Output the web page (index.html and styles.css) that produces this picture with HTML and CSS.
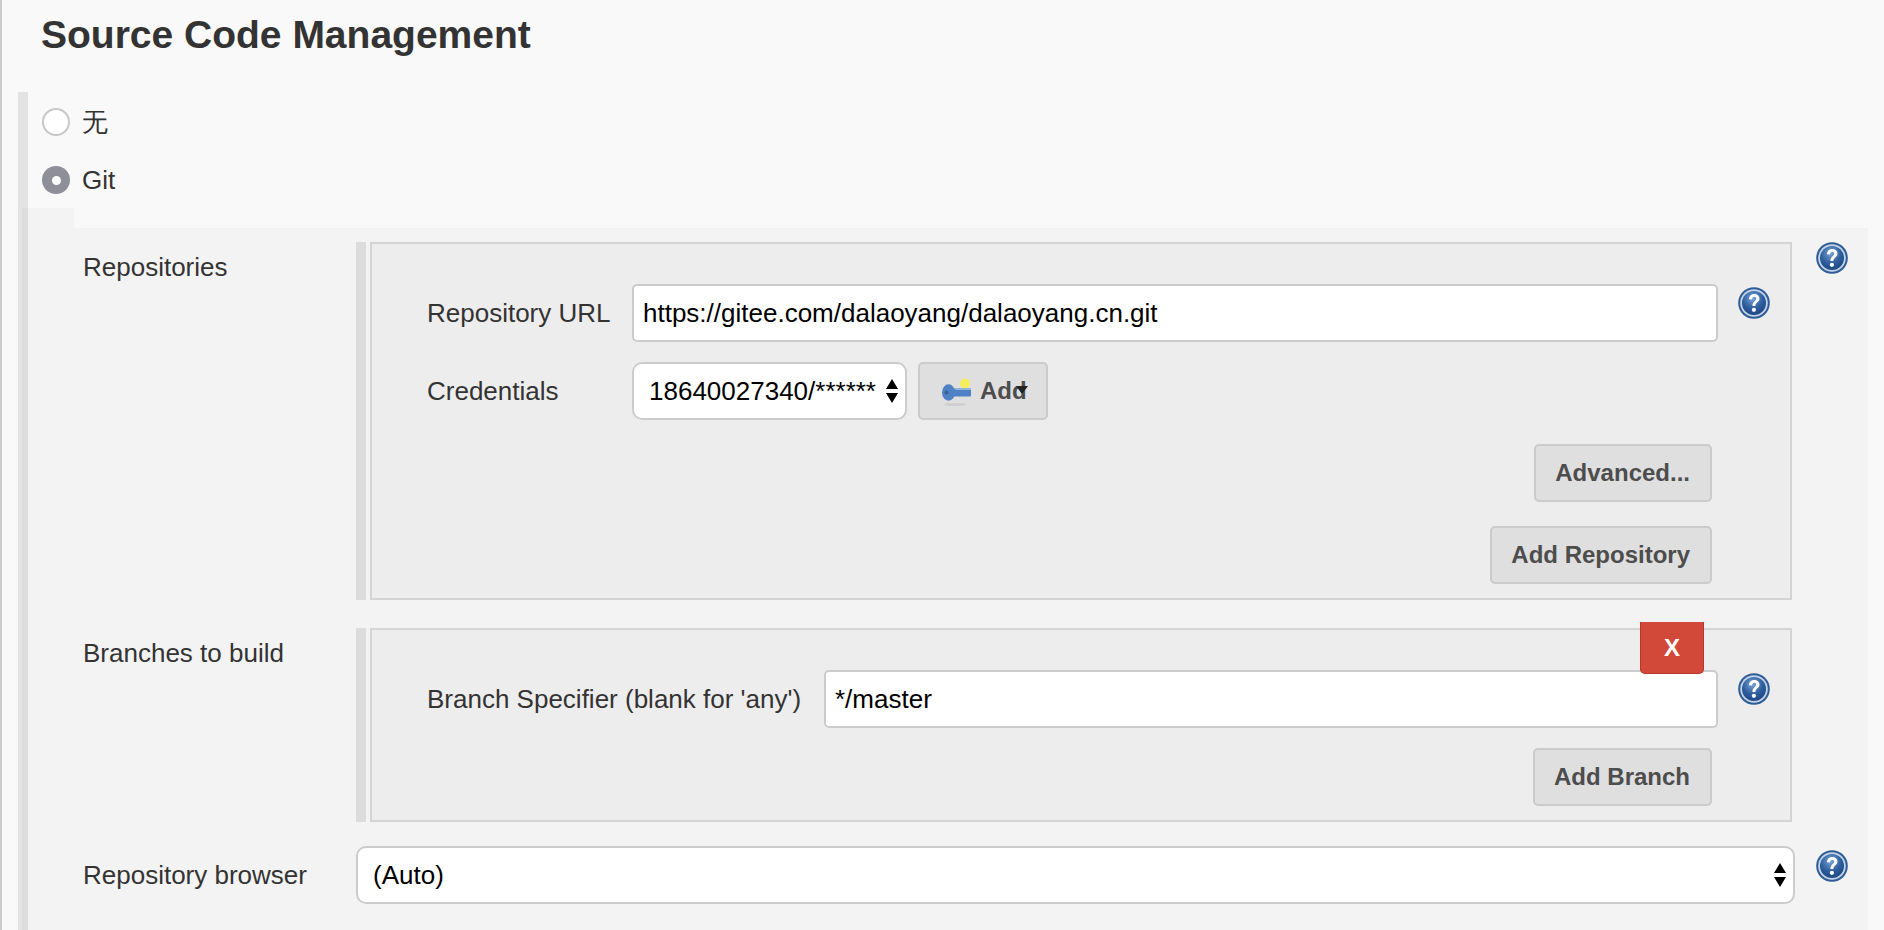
FILE: index.html
```html
<!DOCTYPE html>
<html lang="en">
<head>
<meta charset="utf-8">
<title>Source Code Management</title>
<link rel="stylesheet" href="styles.css">
</head>
<body>
<svg class="defs" aria-hidden="true">
  <defs>
    <radialGradient id="helpFill" cx="45%" cy="30%" r="75%">
      <stop offset="0" stop-color="#7ba5d6"/>
      <stop offset="0.55" stop-color="#2f5f9e"/>
      <stop offset="1" stop-color="#1c4480"/>
    </radialGradient>
    <symbol id="help" viewBox="0 0 32 32">
      <circle cx="16" cy="16" r="15.8" fill="#2f5c98"/>
      <circle cx="16" cy="16" r="13.800" fill="#c3d4e7"/>
      <circle cx="16" cy="16" r="12" fill="url(#helpFill)"/>
      <path d="M10.800 12.200c.3-3.400 2.600-5.300 5.500-5.300 3 0 5.200 1.800 5.200 4.600 0 3.900-4.100 3.800-4.100 7.500h-3c0-4.700 3.800-4.800 3.800-7.400 0-1.200-.8-1.900-1.900-1.900-1.300 0-2.100.9-2.300 2.700z" fill="#fff"/>
      <circle cx="15.900" cy="22.800" r="2.100" fill="#fff"/>
    </symbol>
    <symbol id="updown" viewBox="0 0 12 24">
      <path d="M6 0l6 10H0z M0 14h12L6 24z" fill="#000"/>
    </symbol>
  </defs>
</svg>
<div class="page">
  <h1 class="title">Source Code Management</h1>
  <section class="scm">
    <div class="choices">
      <label class="choice"><span class="radio"></span><span class="choice-text">无</span></label>
      <label class="choice"><span class="radio radio-on"></span><span class="choice-text">Git</span></label>
    </div>
    <div class="notch"></div>
    <div class="git">
      <div class="row row-repos">
        <div class="row-label">Repositories</div>
        <div class="list">
          <div class="gutter"></div>
          <div class="box box-repo">
            <div class="field field-url">
              <label class="field-label">Repository URL</label>
              <input class="text-input" type="text" value="https://gitee.com/dalaoyang/dalaoyang.cn.git">
              <svg class="help"><use href="#help"/></svg>
            </div>
            <div class="field field-cred">
              <label class="field-label">Credentials</label>
              <div class="select-wrap select-cred">
                <select class="select"><option>18640027340/******</option></select>
                <svg class="updown"><use href="#updown"/></svg>
              </div>
              <button class="btn btn-add" type="button">
                <svg class="key" viewBox="0 0 32 32">
                  <ellipse cx="13" cy="29.500" rx="11" ry="1.600" fill="#cfcfcf"/>
                  <circle cx="23" cy="8.500" r="5" fill="#f4ee5c"/>
                  <ellipse cx="6.500" cy="17.500" rx="6.500" ry="8.300" fill="#4f82c4"/>
                  <rect x="10" y="13.500" width="19" height="8" rx="1" fill="#4f82c4"/>
                  <rect x="13" y="13.500" width="16" height="1.500" fill="#8fb4dd"/>
                  <circle cx="4.500" cy="17.500" r="2" fill="#3a6094"/>
                </svg>
                <span>Add</span>
                <span class="caret"></span>
              </button>
            </div>
            <div class="actions actions-adv"><button class="btn" type="button">Advanced...</button></div>
            <div class="actions actions-add"><button class="btn" type="button">Add Repository</button></div>
          </div>
        </div>
        <svg class="help help-outer"><use href="#help"/></svg>
      </div>
      <div class="row row-branches">
        <div class="row-label">Branches to build</div>
        <div class="list">
          <div class="gutter"></div>
          <div class="box box-branch">
            <button class="btn-delete" type="button">X</button>
            <div class="field field-branch">
              <label class="field-label field-label-wide">Branch Specifier (blank for 'any')</label>
              <input class="text-input" type="text" value="*/master">
              <svg class="help"><use href="#help"/></svg>
            </div>
            <div class="actions actions-branch"><button class="btn" type="button">Add Branch</button></div>
          </div>
        </div>
      </div>
      <div class="row row-browser">
        <div class="row-label row-label-mid">Repository browser</div>
        <div class="select-wrap select-browser">
          <select class="select"><option>(Auto)</option></select>
          <svg class="updown"><use href="#updown"/></svg>
        </div>
        <svg class="help help-outer"><use href="#help"/></svg>
      </div>
    </div>
  </section>
</div>
</body>
</html>
```
FILE: styles.css
```css
* { box-sizing: border-box; }
html, body { margin: 0; height: 100%; overflow: hidden; }
body {
  font-family: "Liberation Sans", Arial, sans-serif;
  font-size: 26px;
  color: #333;
  background: #f9f9f9;
}
.defs { position: absolute; width: 0; height: 0; }
.page {
  height: 930px;
  border-left: 2px solid #ccc;
  padding-left: 16px;
  overflow: hidden;
}
.title {
  margin: 0;
  height: 92px;
  padding: 14px 0 0 23px;
  font-size: 39px;
  line-height: 42px;
  font-weight: 700;
  color: #333;
}
.scm {
  border-left: 10px solid #e3e3e3;
  height: 838px;
}
.choices {
  display: flex;
  flex-direction: column;
  gap: 30px;
  padding: 16px 0 14px 14px;
}
.choice { display: flex; align-items: center; gap: 12px; height: 28px; }
.radio {
  width: 28px;
  height: 28px;
  border-radius: 50%;
  background: #fff;
  border: 2px solid #c8c8c8;
}
.radio-on {
  background: #8f8f9a;
  border: 0;
  position: relative;
}
.radio-on::after {
  content: "";
  position: absolute;
  left: 9.500px;
  top: 9.500px;
  width: 9px;
  height: 9px;
  border-radius: 50%;
  background: #fff;
}
.choice-text { line-height: 26px; }
.notch {
  margin-left: -6px;
  width: 52px;
  height: 20px;
  background: rgba(0, 0, 0, .024);
}
.git {
  margin-left: -6px;
  width: 1846px;
  height: 702px;
  padding: 14px 0 0 61px;
  background: rgba(0, 0, 0, .024);
}
.row { display: flex; align-items: flex-start; }
.row-branches { margin-top: 28px; }
.row-browser { margin-top: 24px; }
.row-label { width: 273px; flex: none; line-height: 30px; padding-top: 10px; }
.row-label-mid { padding-top: 14px; }
.list { display: flex; gap: 4px; width: 1436px; flex: none; }
.gutter { width: 10px; flex: none; background: #dcdcdc; }
.box {
  position: relative;
  flex: 1;
  background: #ededed;
  border: 2px solid #d4d4d4;
  padding: 40px 20px 14px 55px;
}
.field { display: flex; align-items: center; }
.field-cred { margin-top: 20px; }
.field-label { width: 205px; flex: none; }
.field-label-wide { width: 397px; }
.text-input {
  flex: 1;
  min-width: 0;
  height: 58px;
  margin-right: 20px;
  padding: 0 9px;
  border: 2px solid #ccc;
  border-radius: 5px;
  background: #fff;
  font: inherit;
  color: #000;
  outline: none;
}
.help { width: 32px; height: 32px; flex: none; margin-top: -20px; }
.help-outer { margin: 0 0 0 21px; }
.row-repos .help-outer { margin: 0 0 0 24px; }
.row-browser .help-outer { margin: 4px 0 0 21px; }
.select-wrap { position: relative; height: 58px; }
.select {
  display: block;
  appearance: none;
  -webkit-appearance: none;
  width: 100%;
  height: 100%;
  padding: 0 0 0 15px;
  border: 2px solid #ccc;
  border-radius: 10px;
  background: #fff;
  font: inherit;
  color: #000;
  outline: none;
}
.select-cred { width: 275px; flex: none; }
.select-browser { width: 1439px; flex: none; }
.updown {
  position: absolute;
  right: 9px;
  top: 17px;
  width: 12px;
  height: 24px;
}
.btn {
  display: inline-flex;
  align-items: center;
  height: 58px;
  padding: 0 20px 0 19px;
  border: 2px solid #cbcbcb;
  border-radius: 5px;
  background: #dfdfdf;
  font: inherit;
  font-size: 24px;
  font-weight: 700;
  color: #4d4d4d;
}
.btn-add {
  position: relative;
  width: 130px;
  margin-left: 11px;
  padding: 0 0 0 22px;
  gap: 6px;
}
.key { width: 32px; height: 32px; flex: none; }
.caret {
  position: absolute;
  left: 96px;
  top: 22px;
  width: 0;
  height: 0;
  border-left: 6px solid transparent;
  border-right: 6px solid transparent;
  border-top: 8px solid #222;
}
.actions { display: flex; justify-content: flex-end; margin-right: 58px; }
.actions-adv { margin-top: 24px; }
.actions-add { margin-top: 24px; }
.actions-branch { margin-top: 20px; }
.btn-delete {
  position: absolute;
  top: -8px;
  right: 86px;
  width: 64px;
  height: 52px;
  border: 1px solid #b63a2c;
  border-top: 0;
  border-radius: 0 0 5px 5px;
  background: #d24939;
  color: #fff;
  font: inherit;
  font-size: 24px;
  font-weight: 700;
  z-index: 1;
}
```
